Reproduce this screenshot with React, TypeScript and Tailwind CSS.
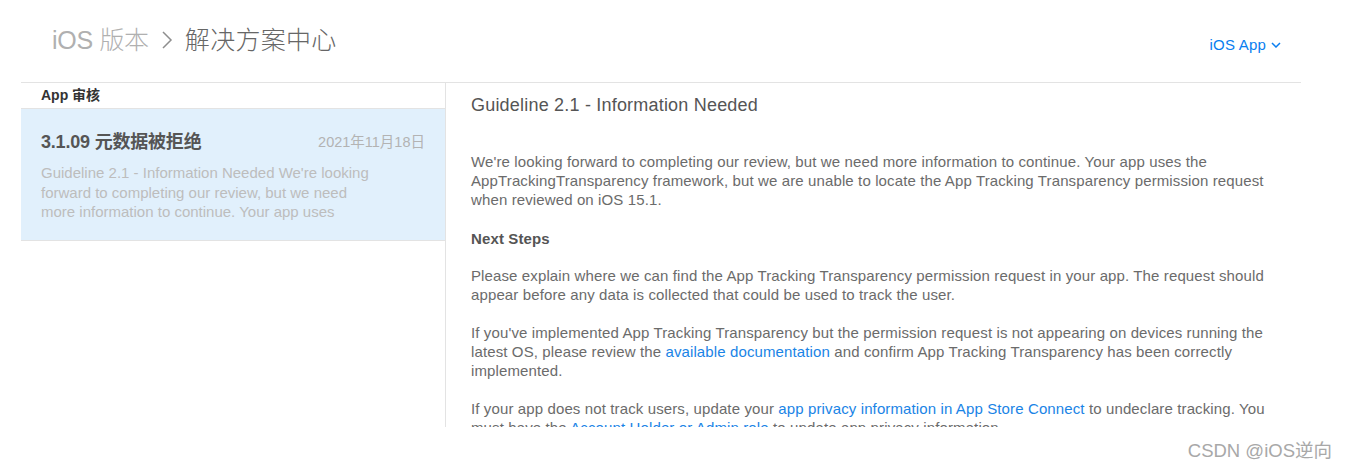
import React from 'react'

const font = { fontFamily: '"Liberation Sans", "Noto Sans CJK SC", sans-serif' }

function Link({ children }: { children: React.ReactNode }) {
  return <span className="text-[#1a84e6]">{children}</span>
}

export default function App() {
  return (
    <div className="relative w-[1345px] h-[469px] bg-white overflow-hidden" style={font}>
      {/* header */}
      <div className="flex items-center justify-between h-[82px] pl-[52px] pr-[64px] pb-[2px]">
        <div className="flex items-center text-[25px] font-light leading-none">
          <span className="text-[#b0b0b0] tracking-[-0.3px]">iOS 版本</span>
          <svg className="ml-[12px] mr-[12px]" width="12" height="20" viewBox="0 0 12 20" fill="none">
            <polyline points="2,2 10,10 2,18" stroke="#8e8e8e" strokeWidth="1.5" />
          </svg>
          <span className="text-[#666] tracking-[0.3px]">解决方案中心</span>
        </div>
        <div className="flex items-center gap-[5px] text-[15px] text-[#0a7ef0] pt-[10px]">
          <span className="tracking-[0.2px]">iOS App</span>
          <svg width="10" height="6" viewBox="0 0 10 6" fill="none">
            <polyline points="1,1 5,5 9,1" stroke="#0a7ef0" strokeWidth="1.5" />
          </svg>
        </div>
      </div>

      {/* main */}
      <div className="ml-[21px] w-[1280px] h-[345px] border-t border-[#e3e3e3] flex overflow-hidden">
        <div className="w-[425px] shrink-0 border-r border-[#e3e3e3]">
          <div className="h-[26px] flex items-center px-5 border-b border-[#e3e3e3] text-[14px] font-bold text-[#333]">
            App 审核
          </div>
          <div className="h-[132px] bg-[#e1f0fc] border-b border-[#e3e3e3] px-5 pt-[20px]">
            <div className="flex items-center justify-between">
              <span className="text-[18px] font-bold text-[#555] tracking-[-0.2px]">3.1.09 元数据被拒绝</span>
              <span className="text-[14.5px] text-[#b3b3b3]">2021年11月18日</span>
            </div>
            <p className="mt-[7px] text-[15px] leading-[19.5px] text-[#bdbdbd] pr-[50px]">
              Guideline 2.1 - Information Needed We're looking forward to completing our review, but we need more
              information to continue. Your app uses
            </p>
          </div>
        </div>

        <div className="flex-1 pl-[25px] pr-[14px] pt-[10px] text-[#6b6b6b] text-[15px] leading-[19px] tracking-[0.12px]">
          <h2 className="text-[18px] leading-[24px] text-[#555] tracking-[0.2px]">Guideline 2.1 - Information Needed</h2>
          <p className="mt-[35px]">
            We're looking forward to completing our review, but we need more information to continue. Your app uses
            the AppTrackingTransparency framework, but we are unable to locate the App Tracking Transparency
            permission request when reviewed on iOS 15.1.
          </p>
          <p className="mt-[20px] font-bold text-[#555]">Next Steps</p>
          <p className="mt-[18px]">
            Please explain where we can find the App Tracking Transparency permission request in your app. The request
            should appear before any data is collected that could be used to track the user.
          </p>
          <p className="mt-[19px]">
            If you've implemented App Tracking Transparency but the permission request is not appearing on devices
            running the latest OS, please review the <Link>available documentation</Link> and confirm App Tracking
            Transparency has been correctly implemented.
          </p>
          <p className="mt-[19px]">
            If your app does not track users, update your <Link>app privacy information in App Store Connect</Link> to
            undeclare tracking. You must have the <Link>Account Holder or Admin role</Link> to update app privacy
            information.
          </p>
        </div>
      </div>

      {/* watermark */}
      <div className="absolute right-[13px] bottom-[4px] text-[18.5px] text-[#a8a8a8]">CSDN @iOS逆向</div>
    </div>
  )
}
